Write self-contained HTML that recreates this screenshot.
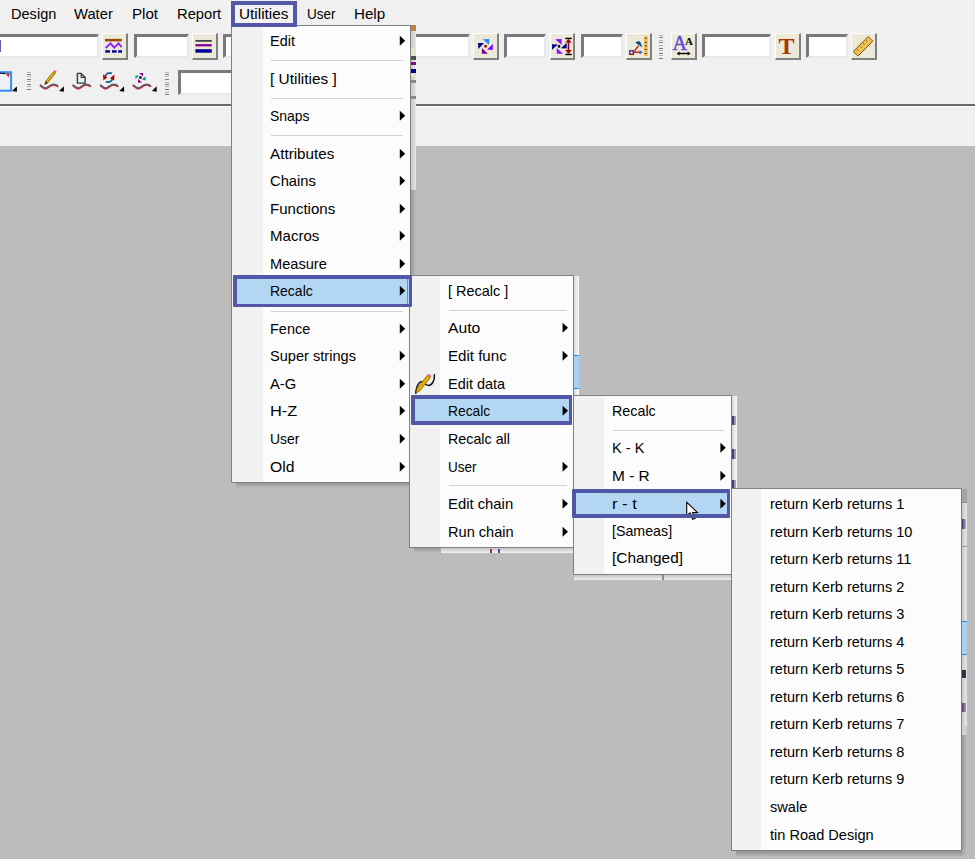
<!DOCTYPE html>
<html><head><meta charset="utf-8"><style>
html,body{margin:0;padding:0;}
body{width:975px;height:859px;position:relative;overflow:hidden;background:#f0f0f0;font-family:"Liberation Sans",sans-serif;}
div{position:absolute;box-sizing:content-box;}
.t{font-size:15px;line-height:20px;white-space:pre;color:#000;transform-origin:0 50%;}
.ar{width:0;height:0;border-left:5.2px solid #000;border-top:4.75px solid transparent;border-bottom:4.75px solid transparent;}
.btn{background:#ece9d8;border-top:1px solid #fff;border-left:1px solid #fff;border-right:2px solid #808080;border-bottom:2px solid #808080;}
.fld{background:#fff;border-top:3px solid #7a7a7a;border-left:3px solid #7a7a7a;border-right:2px solid #e9e9e9;border-bottom:2px solid #e9e9e9;}
svg{position:absolute;left:0;top:0;overflow:visible}
</style></head><body>

<div style="left:0px;top:146px;width:975px;height:713px;background:#bcbcbc"></div>
<div style="left:0px;top:104px;width:975px;height:2px;background:#6a6a6a"></div>
<div style="left:0px;top:106px;width:975px;height:1px;background:#fafafa"></div>
<div class="t" style="left:10.50px;top:4.00px;transform:scaleX(0.9711);">Design</div>
<div class="t" style="left:74.30px;top:4.00px;transform:scaleX(0.9846);">Water</div>
<div class="t" style="left:131.90px;top:4.00px;transform:scaleX(1.0080);">Plot</div>
<div class="t" style="left:176.70px;top:4.00px;transform:scaleX(0.9818);">Report</div>
<div class="t" style="left:307.00px;top:4.00px;transform:scaleX(0.9000);">User</div>
<div class="t" style="left:354.40px;top:4.00px;transform:scaleX(1.0103);">Help</div>
<div class="fld" style="left:-4px;top:34px;width:98px;height:19px;"></div>
<div style="left:0px;top:40.2px;width:1px;height:11.4px;background:#6a5ab0"></div>
<div class="btn" style="left:102px;top:32.5px;width:23px;height:24.5px;"></div>
<div class="fld" style="left:133.5px;top:34px;width:50.5px;height:19px;"></div>
<div class="btn" style="left:192px;top:32.5px;width:23px;height:24.5px;"></div>
<div class="fld" style="left:223px;top:34px;width:52px;height:19px;"></div>
<div class="fld" style="left:380px;top:34px;width:85px;height:19px;"></div>
<div class="btn" style="left:473.3px;top:32.5px;width:22.899999999999977px;height:24.5px;"></div>
<div class="fld" style="left:504px;top:34px;width:37px;height:19px;"></div>
<div class="btn" style="left:549.8px;top:32.5px;width:22.700000000000045px;height:24.5px;"></div>
<div class="fld" style="left:580.6px;top:34px;width:37.39999999999998px;height:19px;"></div>
<div class="btn" style="left:626.2px;top:32.5px;width:22.799999999999955px;height:24.5px;"></div>
<div class="btn" style="left:671px;top:32.5px;width:23px;height:24.5px;"></div>
<div class="fld" style="left:702.3px;top:34px;width:64.20000000000005px;height:19px;"></div>
<div class="btn" style="left:774.8px;top:32.5px;width:22.800000000000068px;height:24.5px;"></div>
<div class="fld" style="left:806.2px;top:34px;width:37.299999999999955px;height:19px;"></div>
<div class="btn" style="left:851px;top:32.5px;width:23px;height:24.5px;"></div>
<div style="left:659px;top:35px;width:4px;height:1px;background:#b4b4b4"></div>
<div style="left:659px;top:37px;width:4px;height:1px;background:#7c7c7c"></div>
<div style="left:659px;top:40px;width:4px;height:1px;background:#b4b4b4"></div>
<div style="left:659px;top:42px;width:4px;height:1px;background:#7c7c7c"></div>
<div style="left:659px;top:45px;width:4px;height:1px;background:#b4b4b4"></div>
<div style="left:659px;top:48px;width:4px;height:1px;background:#7c7c7c"></div>
<div style="left:659px;top:50px;width:4px;height:1px;background:#b4b4b4"></div>
<div style="left:659px;top:53px;width:4px;height:1px;background:#7c7c7c"></div>
<div style="left:659px;top:55px;width:4px;height:1px;background:#b4b4b4"></div>
<div style="left:659px;top:58px;width:4px;height:1px;background:#7c7c7c"></div>
<div class="fld" style="left:178.2px;top:70.2px;width:76.80000000000001px;height:19.599999999999994px;"></div>
<div style="left:26.5px;top:72px;width:4px;height:1px;background:#b4b4b4"></div>
<div style="left:26.5px;top:74px;width:4px;height:1px;background:#7c7c7c"></div>
<div style="left:26.5px;top:76px;width:4px;height:1px;background:#b4b4b4"></div>
<div style="left:26.5px;top:79px;width:4px;height:1px;background:#7c7c7c"></div>
<div style="left:26.5px;top:81px;width:4px;height:1px;background:#b4b4b4"></div>
<div style="left:26.5px;top:84px;width:4px;height:1px;background:#7c7c7c"></div>
<div style="left:26.5px;top:86px;width:4px;height:1px;background:#b4b4b4"></div>
<div style="left:26.5px;top:89px;width:4px;height:1px;background:#7c7c7c"></div>
<div style="left:165.2px;top:72px;width:4px;height:1px;background:#b4b4b4"></div>
<div style="left:165.2px;top:74px;width:4px;height:1px;background:#7c7c7c"></div>
<div style="left:165.2px;top:76px;width:4px;height:1px;background:#b4b4b4"></div>
<div style="left:165.2px;top:79px;width:4px;height:1px;background:#7c7c7c"></div>
<div style="left:165.2px;top:82px;width:4px;height:1px;background:#b4b4b4"></div>
<div style="left:165.2px;top:84px;width:4px;height:1px;background:#7c7c7c"></div>
<div style="left:165.2px;top:86px;width:4px;height:1px;background:#b4b4b4"></div>
<div style="left:165.2px;top:89px;width:4px;height:1px;background:#7c7c7c"></div>
<div style="left:165.2px;top:92px;width:4px;height:1px;background:#b4b4b4"></div>
<div style="left:165.2px;top:94px;width:4px;height:1px;background:#7c7c7c"></div>
<svg width="975" height="110" viewBox="0 0 975 110" style="position:absolute;left:0;top:0"><rect x="105" y="38.9" width="16.8" height="2.5" fill="#9a4a00"/><path d="M105.6,48 L110.5,43.3 L114.2,47.6 L118.5,43.3 L121.6,47.1" fill="none" stroke="#8a20ff" stroke-width="1.8"/><rect x="105.3" y="50.2" width="4.6" height="2.5" fill="#000090"/><rect x="112" y="50.2" width="4.6" height="2.5" fill="#000090"/><rect x="118.2" y="50.2" width="3.8" height="2.5" fill="#000090"/><rect x="195.4" y="40.1" width="16.4" height="1.6" fill="#333"/><rect x="195.4" y="44.1" width="16.4" height="2.3" fill="#8a0090"/><rect x="195.4" y="49.2" width="16.4" height="3.5" fill="#000090"/><path d="M482.9,39.3 L489.4,38.9 L489,44.9 Z" fill="#1a90ff"/><path d="M478,42.9 L484,43 L478.4,49 Z" fill="#000080"/><path d="M487.1,49.4 L492.9,44 L492.7,50.1 Z" fill="#8000ff"/><path d="M481.9,47.9 L487.9,53.7 L481.9,53.8 Z" fill="#800090"/><rect x="484.2" y="44.9" width="2.6" height="2.6" fill="#a01010"/><path d="M555.1,39.3 L561.6,38.9 L561.6,44.9 Z" fill="#8a10ff"/><path d="M552,44.2 L557.9,44.5 L552.1,49.7 Z" fill="#000090"/><path d="M560.9,48.3 L566.7,42.7 L566.7,48.6 Z" fill="#000090"/><path d="M556.8,47.9 L563,53.7 L556.8,53.8 Z" fill="#8a10ff"/><circle cx="559" cy="46.4" r="1.3" fill="#000"/><rect x="567.7" y="40" width="1.6" height="13" fill="#a00000"/><path d="M565.2,42.6 L568.5,38.9 L571.8,42.6 Z" fill="#a00000"/><path d="M565.2,50.1 L568.5,53.8 L571.8,50.1 Z" fill="#a00000"/><rect x="565.4" y="37.7" width="6.3" height="1.5" fill="#000"/><rect x="565.4" y="53.7" width="6.3" height="1.5" fill="#000"/><rect x="644" y="36.1" width="3.8" height="20" fill="#f2c060"/><rect x="644.5" y="37.7" width="2.5" height="1.1" fill="#6a4a10"/><rect x="644.5" y="41.8" width="2.5" height="1.1" fill="#6a4a10"/><rect x="644.5" y="45.3" width="2.5" height="1.1" fill="#6a4a10"/><rect x="644.5" y="48.9" width="2.5" height="1.1" fill="#6a4a10"/><rect x="644.5" y="53.0" width="2.5" height="1.1" fill="#6a4a10"/><path d="M634.5,50.8 L638.5,45.6" stroke="#b01010" stroke-width="1.3"/><path d="M635.3,42.8 C637,41 639.5,40.6 640.5,42.5 L642.4,47.5 L639,45 Z" fill="#004a90"/><path d="M633.6,52.2 L639.8,52.2" stroke="#c01010" stroke-width="1.4"/><path d="M639.5,50.3 L642.8,52.3 L639.5,54.3 Z" fill="#2060d0"/><rect x="629.8" y="50.8" width="3.6" height="3.6" fill="#fff" stroke="#3020a0" stroke-width="1.3"/><path d="M633.4,50.8 L633.4,54.4 L629.8,54.4" fill="none" stroke="#c01010" stroke-width="1.3"/><text x="672.4" y="50.3" font-family="Liberation Serif" font-size="20" fill="#5a4ad8" stroke="#5a4ad8" stroke-width="0.5">A</text><text x="685" y="44.9" font-family="Liberation Serif" font-weight="bold" font-size="11" fill="#000">A</text><path d="M678.5,53.5 L688.7,53.5" stroke="#000" stroke-width="1.4"/><path d="M676.6,53.5 L679.6,51.4 L679.6,55.6 Z" fill="#000"/><path d="M690.6,53.5 L687.6,51.4 L687.6,55.6 Z" fill="#000"/><text x="778.4" y="53.8" font-family="Liberation Serif" font-weight="bold" font-size="24" fill="#a83800">T</text><path d="M853.2,51.6 L868.3,36.5 L872.8,41.2 L857.9,56.1 Z" fill="#f0c050" stroke="#7a5210" stroke-width="1"/><path d="M857.0,49.4 L858.4,50.8" stroke="#7a5210" stroke-width="1"/><path d="M860.0,46.4 L861.4,47.8" stroke="#7a5210" stroke-width="1"/><path d="M863.1,43.3 L864.5,44.7" stroke="#7a5210" stroke-width="1"/><path d="M866.1,40.3 L867.5,41.7" stroke="#7a5210" stroke-width="1"/><rect x="-2" y="72.2" width="13.1" height="18.5" fill="#eef2f6" stroke="#2f8ef5" stroke-width="2"/><path d="M-1,73.5 C1,73 3,73.2 5.5,73.6" stroke="#111" stroke-width="1.2" fill="none"/><path d="M5.6,73.2 L10.1,73.2 L8.5,77.5 Z" fill="#c03030"/><path d="M12.1,91.10000000000001 L16.9,86.3 L16.9,91.7 Z" fill="#000"/><path d="M40.5,85.6 C42.5,87.4 44.0,88.8 45.7,88.6 C48.5,88.2 50.5,84.5 53.7,84.8 C55.5,85 56.8,85.6 57.6,86.2" fill="none" stroke="#c02434" stroke-width="1.8" stroke-linecap="round"/><path d="M40.5,85.0 C42.5,86.8 44.0,88.0 45.7,87.8 C48.5,87.4 50.5,83.9 53.7,84.2 C55.5,84.4 56.8,85.0 57.6,85.6" fill="none" stroke="#5a646e" stroke-width="1.2" stroke-linecap="round"/><path d="M44.8,84.5 L45.65,81.34 L53.58,71.39 L55.62,73.01 L47.69,82.96 Z" fill="#e0ac00" stroke="#5a4000" stroke-width="0.6"/><path d="M53.58,71.39 L54.7,69.98 L56.74,71.6 L55.62,73.01 Z" fill="#e07090"/><path d="M44.8,84.5 L45.65,81.34 L47.69,82.96 Z" fill="#222"/><path d="M59.1,91.10000000000001 L63.9,86.3 L63.9,91.7 Z" fill="#000"/><path d="M73.2,85.6 C75.2,87.4 76.7,88.8 78.4,88.6 C81.2,88.2 83.2,84.5 86.4,84.8 C88.2,85 89.5,85.6 90.30000000000001,86.2" fill="none" stroke="#c02434" stroke-width="1.8" stroke-linecap="round"/><path d="M73.2,85.0 C75.2,86.8 76.7,88.0 78.4,87.8 C81.2,87.4 83.2,83.9 86.4,84.2 C88.2,84.4 89.5,85.0 90.30000000000001,85.6" fill="none" stroke="#5a646e" stroke-width="1.2" stroke-linecap="round"/><path d="M77.4,73.4 L81.2,73.4 L85.1,77.3 L85.1,83.1 L77.4,83.1 Z" fill="#e6f2f8" stroke="#3a3a3a" stroke-width="1.4"/><path d="M81.2,73.4 L81.2,77.3 L85.1,77.3" fill="none" stroke="#3a3a3a" stroke-width="1.2"/><path d="M100.6,85.6 C102.6,87.4 104.1,88.8 105.8,88.6 C108.6,88.2 110.6,84.5 113.8,84.8 C115.6,85 116.89999999999999,85.6 117.69999999999999,86.2" fill="none" stroke="#c02434" stroke-width="1.8" stroke-linecap="round"/><path d="M100.6,85.0 C102.6,86.8 104.1,88.0 105.8,87.8 C108.6,87.4 110.6,83.9 113.8,84.2 C115.6,84.4 116.89999999999999,85.0 117.69999999999999,85.6" fill="none" stroke="#5a646e" stroke-width="1.2" stroke-linecap="round"/><path d="M105.2,77 C105.6,73.6 109,72.2 112,73.4" fill="none" stroke="#2a6a9a" stroke-width="2"/><path d="M103,74.2 L107.2,77.6 L103.4,80.4 Z" fill="#b00000"/><path d="M112.6,78 C112.2,81.4 108.8,82.8 105.8,81.6" fill="none" stroke="#2a6a9a" stroke-width="2"/><path d="M114.4,74.6 L114.2,80.4 L110,78.2 Z" fill="#b00000"/><path d="M119.3,91.10000000000001 L124.1,86.3 L124.1,91.7 Z" fill="#000"/><path d="M133.4,85.6 C135.4,87.4 136.9,88.8 138.6,88.6 C141.4,88.2 143.4,84.5 146.6,84.8 C148.4,85 149.70000000000002,85.6 150.5,86.2" fill="none" stroke="#c02434" stroke-width="1.8" stroke-linecap="round"/><path d="M133.4,85.0 C135.4,86.8 136.9,88.0 138.6,87.8 C141.4,87.4 143.4,83.9 146.6,84.2 C148.4,84.4 149.70000000000002,85.0 150.5,85.6" fill="none" stroke="#5a646e" stroke-width="1.2" stroke-linecap="round"/><path d="M139.1,73.1 L143,72.9 L143,76.4 Z" fill="#900090"/><path d="M135.2,75.7 L139.2,75.3 L135.6,79.1 Z" fill="#109090"/><path d="M141.8,79.3 L145.6,76.6 L145.6,80.4 Z" fill="#109090"/><path d="M138,79 L141.9,82.6 L138,82.8 Z" fill="#900090"/><circle cx="140.4" cy="77.6" r="1.4" fill="#000"/><path d="M151.9,91.10000000000001 L156.70000000000002,86.3 L156.70000000000002,91.7 Z" fill="#000"/></svg>
<div style="left:231px;top:25px;width:178px;height:456px;border:1px solid #808080;background:#fcfcfc;"></div>
<div style="left:232px;top:26px;width:31px;height:456px;background:#f1f1f1"></div>
<div style="left:411px;top:27px;width:5px;height:163px;background:linear-gradient(90deg,#c8c8c8,#e6e6e6)"></div>
<div style="left:411px;top:25px;width:5px;height:6.399999999999999px;background:#c08040"></div>
<div style="left:411px;top:48px;width:5px;height:7.5px;background:#e6e2d0"></div>
<div style="left:411px;top:55.5px;width:5px;height:4.0px;background:#505050"></div>
<div style="left:411px;top:61.5px;width:5px;height:3.5px;background:#8a0090"></div>
<div style="left:411px;top:69px;width:5px;height:4px;background:#000090"></div>
<div style="left:411px;top:73px;width:5px;height:4px;background:#e4e0cc"></div>
<div style="left:411px;top:80px;width:5px;height:3px;background:#888"></div>
<div style="left:411px;top:96px;width:5px;height:3px;background:#888"></div>
<div style="left:411px;top:190px;width:5px;height:290px;background:linear-gradient(90deg,#9a9a9a,#bcbcbc)"></div>
<div style="left:236px;top:483px;width:174px;height:5px;background:linear-gradient(180deg,#969696,#bcbcbc)"></div>
<div style="left:230.5px;top:1px;width:58px;height:18px;border:4px solid #5258a6;background:#f2f2f2"></div>
<div class="t" style="left:239.30px;top:4.00px;transform:scaleX(1.0213);">Utilities</div>
<div style="left:271px;top:60px;width:132px;height:1px;background:#d2d2d2"></div>
<div style="left:271px;top:98px;width:132px;height:1px;background:#d2d2d2"></div>
<div style="left:271px;top:135px;width:132px;height:1px;background:#d2d2d2"></div>
<div style="left:271px;top:311px;width:132px;height:1px;background:#d2d2d2"></div>
<div class="t" style="left:270.10px;top:31.00px;transform:scaleX(0.9640);">Edit</div>
<div class="t" style="left:270.10px;top:69.00px;transform:scaleX(1.0286);">[ Utilities ]</div>
<div class="t" style="left:270.10px;top:106.00px;transform:scaleX(0.9293);">Snaps</div>
<div class="t" style="left:270.10px;top:144.00px;transform:scaleX(1.0159);">Attributes</div>
<div class="t" style="left:270.10px;top:171.00px;transform:scaleX(0.9822);">Chains</div>
<div class="t" style="left:270.10px;top:199.00px;">Functions</div>
<div class="t" style="left:270.10px;top:226.00px;">Macros</div>
<div class="t" style="left:270.10px;top:254.00px;transform:scaleX(0.9737);">Measure</div>
<div class="t" style="left:270.10px;top:319.00px;transform:scaleX(0.9650);">Fence</div>
<div class="t" style="left:270.10px;top:346.00px;transform:scaleX(0.9724);">Super strings</div>
<div class="t" style="left:270.10px;top:374.00px;transform:scaleX(0.9846);">A-G</div>
<div class="t" style="left:270.10px;top:401.00px;transform:scaleX(1.0917);">H-Z</div>
<div class="t" style="left:270.10px;top:429.00px;transform:scaleX(0.9290);">User</div>
<div class="t" style="left:270.10px;top:457.00px;transform:scaleX(1.0455);">Old</div>
<svg width="975" height="859" style="position:absolute;left:0;top:0"><path d="M399.80,35.85L405.20,40.75L399.80,45.65ZM399.80,110.85L405.20,115.75L399.80,120.65ZM399.80,148.85L405.20,153.75L399.80,158.65ZM399.80,175.85L405.20,180.75L399.80,185.65ZM399.80,203.85L405.20,208.75L399.80,213.65ZM399.80,230.85L405.20,235.75L399.80,240.65ZM399.80,258.85L405.20,263.75L399.80,268.65ZM399.80,323.85L405.20,328.75L399.80,333.65ZM399.80,350.85L405.20,355.75L399.80,360.65ZM399.80,378.85L405.20,383.75L399.80,388.65ZM399.80,405.85L405.20,410.75L399.80,415.65ZM399.80,433.85L405.20,438.75L399.80,443.65ZM399.80,461.85L405.20,466.75L399.80,471.65Z" fill="#000"/></svg>
<div style="left:574px;top:276px;width:5px;height:119px;background:linear-gradient(90deg,#d8d8d8,#fafafa)"></div>
<div style="left:574px;top:354.8px;width:5px;height:34.2px;background:#a8d0f0;border-top:1px solid #3a8ad8;border-bottom:1px solid #3a8ad8;box-sizing:border-box"></div>
<div style="left:441px;top:548px;width:132px;height:5px;background:linear-gradient(180deg,#c4c4c4,#f2f2f2)"></div>
<div style="left:414px;top:548px;width:27px;height:5px;background:linear-gradient(180deg,#9a9a9a,#bcbcbc)"></div>
<div style="left:490px;top:548.5px;width:1.5px;height:4px;background:#a03040"></div>
<div style="left:498px;top:548.5px;width:1.5px;height:4px;background:#6040a0"></div>
<div style="left:409px;top:275px;width:163px;height:271px;border:1px solid #808080;background:#fcfcfc;"></div>
<div style="left:410px;top:276px;width:30px;height:271px;background:#f1f1f1"></div>
<div style="left:449px;top:310px;width:117.5px;height:1px;background:#d2d2d2"></div>
<div style="left:449px;top:485px;width:117.5px;height:1px;background:#d2d2d2"></div>
<div class="t" style="left:448.00px;top:281.00px;transform:scaleX(0.9656);">[ Recalc ]</div>
<div class="t" style="left:448.00px;top:318.00px;transform:scaleX(1.0467);">Auto</div>
<div class="t" style="left:448.00px;top:346.00px;transform:scaleX(1.0053);">Edit func</div>
<div class="t" style="left:448.00px;top:374.00px;transform:scaleX(0.9638);">Edit data</div>
<div class="t" style="left:448.00px;top:429.00px;transform:scaleX(0.9524);">Recalc all</div>
<div class="t" style="left:448.00px;top:457.00px;transform:scaleX(0.9000);">User</div>
<div class="t" style="left:448.00px;top:494.00px;transform:scaleX(0.9891);">Edit chain</div>
<div class="t" style="left:448.00px;top:522.00px;transform:scaleX(0.9727);">Run chain</div>
<svg width="975" height="859" style="position:absolute;left:0;top:0"><path d="M562.60,322.85L568.00,327.75L562.60,332.65ZM562.60,350.85L568.00,355.75L562.60,360.65ZM562.60,461.85L568.00,466.75L562.60,471.65ZM562.60,498.85L568.00,503.75L562.60,508.65ZM562.60,526.85L568.00,531.75L562.60,536.65Z" fill="#000"/></svg>
<div style="left:732px;top:396px;width:5px;height:93px;background:linear-gradient(90deg,#d8d8d8,#fafafa)"></div>
<div style="left:732px;top:415.5px;width:1.6px;height:9.0px;background:#6a3060"></div>
<div style="left:734.2px;top:415.5px;width:1.6px;height:9.0px;background:#80a8d0"></div>
<div style="left:732px;top:449px;width:1.6px;height:10px;background:#6a3060"></div>
<div style="left:734.2px;top:449px;width:1.6px;height:10px;background:#80a8d0"></div>
<div style="left:732px;top:480px;width:1.6px;height:7.5px;background:#6a3060"></div>
<div style="left:734.2px;top:480px;width:1.6px;height:7.5px;background:#80a8d0"></div>
<div style="left:574px;top:575px;width:157px;height:5px;background:linear-gradient(180deg,#c4c4c4,#f2f2f2)"></div>
<div style="left:662px;top:575px;width:1.5px;height:5px;background:#8a8a8a"></div>
<div style="left:573px;top:395px;width:157px;height:178px;border:1px solid #808080;background:#fcfcfc;"></div>
<div style="left:574px;top:396px;width:30px;height:178px;background:#f1f1f1"></div>
<div style="left:613px;top:430px;width:111px;height:1px;background:#d2d2d2"></div>
<div class="t" style="left:612.10px;top:401.00px;transform:scaleX(0.9545);">Recalc</div>
<div class="t" style="left:612.10px;top:438.00px;transform:scaleX(0.9719);">K - K</div>
<div class="t" style="left:612.10px;top:466.00px;transform:scaleX(1.0286);">M - R</div>
<div class="t" style="left:612.10px;top:521.00px;transform:scaleX(0.9484);">[Sameas]</div>
<div class="t" style="left:612.10px;top:548.00px;transform:scaleX(1.0254);">[Changed]</div>
<svg width="975" height="859" style="position:absolute;left:0;top:0"><path d="M720.40,442.85L725.80,447.75L720.40,452.65ZM720.40,470.85L725.80,475.75L720.40,480.65Z" fill="#000"/></svg>
<div style="left:962px;top:489px;width:5px;height:13px;background:#a4a4a4"></div>
<div style="left:962px;top:502px;width:5px;height:224px;background:linear-gradient(90deg,#c8c8c8,#e8e8e8)"></div>
<div style="left:962px;top:502px;width:5px;height:1px;background:#8a8a8a"></div>
<div style="left:962px;top:546px;width:5px;height:1px;background:#9a9a9a"></div>
<div style="left:962px;top:518.5px;width:4px;height:10px;background:linear-gradient(90deg,#503050,#90c0e0)"></div>
<div style="left:962px;top:621px;width:5px;height:33.5px;background:#a8d0f0;border-top:1px solid #3a8ad8;border-bottom:1px solid #3a8ad8;box-sizing:border-box"></div>
<div style="left:962px;top:670px;width:4px;height:8px;background:#303040"></div>
<div style="left:962px;top:703px;width:4px;height:9px;background:linear-gradient(90deg,#5a3060,#a0a0c0)"></div>
<div style="left:962px;top:726px;width:5px;height:9px;background:#d0d0d0"></div>
<div style="left:962px;top:851px;width:6px;height:6px;background:radial-gradient(circle at 0 0,#9a9a9a,#bcbcbc 6px)"></div>
<div style="left:736px;top:851px;width:226px;height:6px;background:linear-gradient(180deg,#8e8e8e,#bcbcbc)"></div>
<div style="left:962px;top:735px;width:5px;height:115px;background:linear-gradient(90deg,#9a9a9a,#bcbcbc)"></div>
<div style="left:731px;top:488px;width:229px;height:361px;border:1px solid #808080;background:#fcfcfc;"></div>
<div style="left:732px;top:489px;width:29px;height:361px;background:#f1f1f1"></div>
<div class="t" style="left:770.30px;top:494.00px;transform:scaleX(0.9708);transform:scaleX(0.9708);">return Kerb returns 1</div>
<div class="t" style="left:770.30px;top:522.00px;transform:scaleX(0.9724);transform:scaleX(0.9708);">return Kerb returns 10</div>
<div class="t" style="left:770.30px;top:549.00px;transform:scaleX(0.9708);">return Kerb returns 11</div>
<div class="t" style="left:770.30px;top:577.00px;transform:scaleX(0.9708);">return Kerb returns 2</div>
<div class="t" style="left:770.30px;top:604.00px;transform:scaleX(0.9708);">return Kerb returns 3</div>
<div class="t" style="left:770.30px;top:632.00px;transform:scaleX(0.9708);">return Kerb returns 4</div>
<div class="t" style="left:770.30px;top:659.00px;transform:scaleX(0.9708);">return Kerb returns 5</div>
<div class="t" style="left:770.30px;top:687.00px;transform:scaleX(0.9708);">return Kerb returns 6</div>
<div class="t" style="left:770.30px;top:714.00px;transform:scaleX(0.9708);">return Kerb returns 7</div>
<div class="t" style="left:770.30px;top:742.00px;transform:scaleX(0.9708);">return Kerb returns 8</div>
<div class="t" style="left:770.30px;top:769.00px;transform:scaleX(0.9708);">return Kerb returns 9</div>
<div class="t" style="left:770.30px;top:797.00px;transform:scaleX(0.9649);transform:scaleX(0.9708);">swale</div>
<div class="t" style="left:770.30px;top:825.00px;transform:scaleX(0.9698);transform:scaleX(0.9708);">tin Road Design</div>
<div style="left:237px;top:279px;width:171.80px;height:25.00px;background:#b3d7f3;"></div>
<div style="left:415px;top:399px;width:153.50px;height:22.20px;background:#b3d7f3;"></div>
<div style="left:576.3px;top:493px;width:150.40px;height:21.30px;background:#b3d7f3;"></div>
<div style="left:407px;top:279px;width:1.2px;height:25px;background:#3a9af0"></div>
<div class="t" style="left:270.10px;top:281.00px;transform:scaleX(0.9318);">Recalc</div>
<div class="t" style="left:448.00px;top:401.00px;transform:scaleX(0.9205);">Recalc</div>
<div class="t" style="left:612.10px;top:494.00px;transform:scaleX(1.1000);">r - t</div>
<svg width="975" height="859" style="position:absolute;left:0;top:0"><path d="M399.80,285.85L405.20,290.75L399.80,295.65ZM562.60,405.85L568.00,410.75L562.60,415.65ZM720.40,498.85L725.80,503.75L720.40,508.65Z" fill="#000"/></svg>
<svg width="975" height="859" style="position:absolute;left:0;top:0"><path d="M686.7,502.2 L686.7,515.8 L690,512.9 L692.7,519.2 L695.1,518.2 L692.6,512.6 L697.6,512.6 Z" fill="#fff" stroke="#000" stroke-width="1.1" stroke-linejoin="miter"/></svg>
<div style="left:233px;top:275px;width:171.80px;height:25.00px;border-style:solid;border-color:#5258a6;border-width:4px 3.5px 3px 4px;border-radius:1px"></div>
<div style="left:411px;top:395px;width:153.50px;height:22.20px;border-style:solid;border-color:#5258a6;border-width:4px 3.5px 4px 4px;border-radius:1px"></div>
<div style="left:572.3px;top:489px;width:150.40px;height:21.30px;border-style:solid;border-color:#5258a6;border-width:4px 3.5px 4px 4px;border-radius:1px"></div>
<svg width="975" height="859" style="position:absolute;left:0;top:0"><path d="M415.8,393.2 C416,389 417.5,384.5 420,382 C422,380.5 424,383 426,384.5 C428.5,386.2 431,385.5 432.8,382.5 C434.3,380 434.6,377 434.4,374.8" fill="none" stroke="#111" stroke-width="1.5" stroke-linecap="round"/><path d="M416,392.9 L416.9,388.6 L427.4,375.2 L430.4,377.6 L419.8,390.9 Z" fill="#e3b000" stroke="#5a4000" stroke-width="0.6"/><path d="M427.4,375.2 L428.6,373.8 L431.6,376.1 L430.4,377.6 Z" fill="#e06a88"/></svg>
</body></html>
